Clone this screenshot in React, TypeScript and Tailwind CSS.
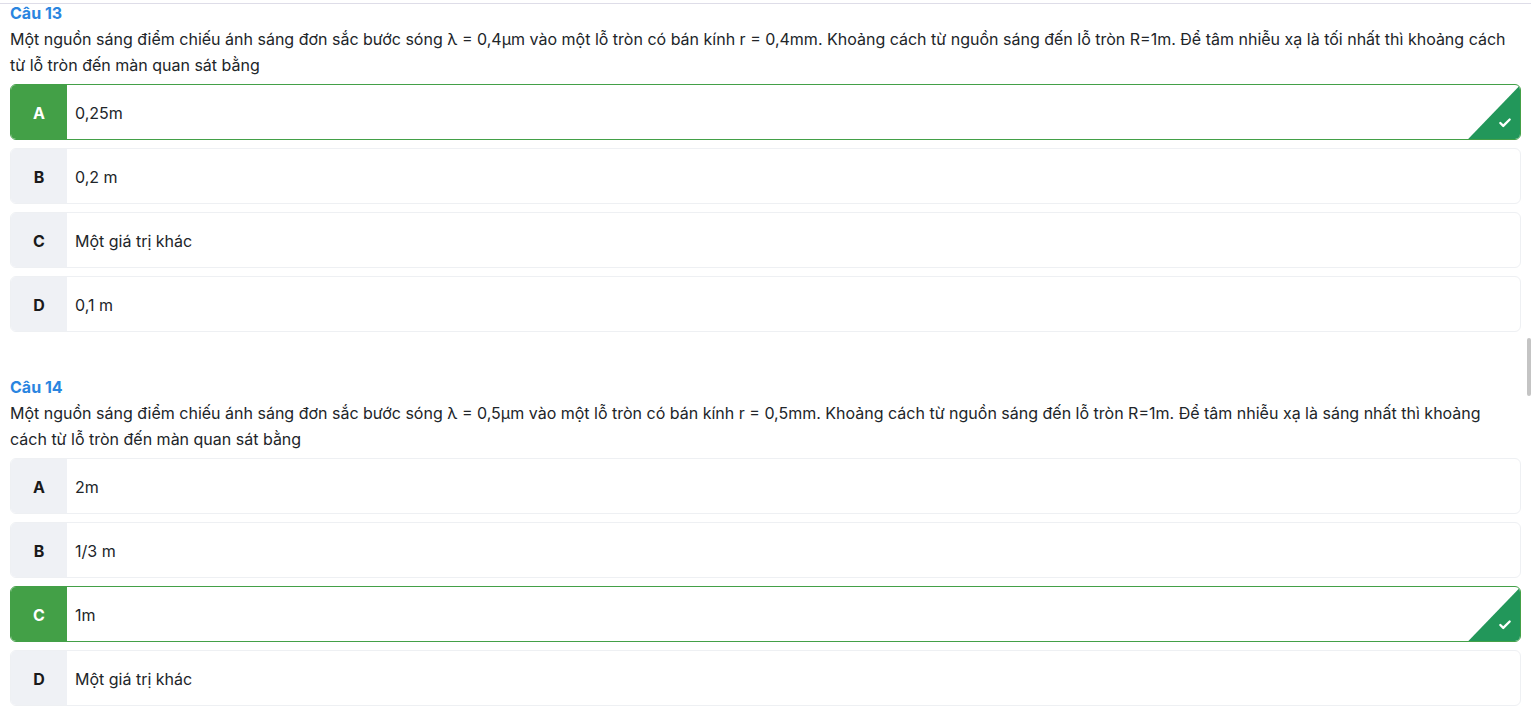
import { Check } from 'lucide-react';

type Option = { key: string; text: string; correct?: boolean };

type Question = { title: string; body: string; options: Option[] };

const questions: Question[] = [
  {
    title: 'Câu 13',
    body: 'Một nguồn sáng điểm chiếu ánh sáng đơn sắc bước sóng λ = 0,4μm vào một lỗ tròn có bán kính r = 0,4mm. Khoảng cách từ nguồn sáng đến lỗ tròn R=1m. Để tâm nhiễu xạ là tối nhất thì khoảng cách từ lỗ tròn đến màn quan sát bằng',
    options: [
      { key: 'A', text: '0,25m', correct: true },
      { key: 'B', text: '0,2 m' },
      { key: 'C', text: 'Một giá trị khác' },
      { key: 'D', text: '0,1 m' },
    ],
  },
  {
    title: 'Câu 14',
    body: 'Một nguồn sáng điểm chiếu ánh sáng đơn sắc bước sóng λ = 0,5μm vào một lỗ tròn có bán kính r = 0,5mm. Khoảng cách từ nguồn sáng đến lỗ tròn R=1m. Để tâm nhiễu xạ là sáng nhất thì khoảng cách từ lỗ tròn đến màn quan sát bằng',
    options: [
      { key: 'A', text: '2m' },
      { key: 'B', text: '1/3 m' },
      { key: 'C', text: '1m', correct: true },
      { key: 'D', text: 'Một giá trị khác' },
    ],
  },
];

function OptionRow({ option }: { option: Option }) {
  if (option.correct) {
    return (
      <div className="relative flex h-[56px] overflow-hidden rounded-[6px] border border-[#43a047] bg-white">
        <div className="flex w-[56px] shrink-0 items-center justify-center bg-[#43a047] pt-[1px] text-[16px] font-bold text-white">
          {option.key}
        </div>
        <div className="flex items-center pl-[8px] pt-[1px] text-[16px] text-[#212529]">{option.text}</div>
        {/* corner badge */}
        <div className="absolute bottom-0 right-0 h-[54px] w-[52px] bg-[#22975a] [clip-path:polygon(100%_0,100%_100%,0_100%)]" />
        <Check className="absolute bottom-[9px] right-[8px] text-white" size={14} strokeWidth={4} />
      </div>
    );
  }
  return (
    <div className="flex h-[56px] overflow-hidden rounded-[6px] border border-[#eef0f3] bg-white">
      <div className="flex w-[56px] shrink-0 items-center justify-center bg-[#eff1f5] pt-[1px] text-[16px] font-bold text-[#1a1a1a]">
        {option.key}
      </div>
      <div className="flex items-center pl-[8px] pt-[1px] text-[16px] text-[#212529]">{option.text}</div>
    </div>
  );
}

function QuestionBlock({ q }: { q: Question }) {
  return (
    <div>
      <div className="h-[18px] text-[16px] font-bold leading-[18px] text-[#2a85e0]">{q.title}</div>
      <p className="mt-[5px] text-[16px] leading-[25.6px] text-[#212529]">{q.body}</p>
      <div className="mt-[6px] flex flex-col gap-[8px]">
        {q.options.map((o) => (
          <OptionRow key={o.key} option={o} />
        ))}
      </div>
    </div>
  );
}

export default function App() {
  return (
    <div className="relative min-h-screen bg-white font-['Inter',sans-serif]">
      <div className="h-[3px]" />
      <div className="border-t border-[#dedde8] px-[10px]">
        <div className="flex flex-col gap-[46px]">
          {questions.map((q) => (
            <QuestionBlock key={q.title} q={q} />
          ))}
        </div>
      </div>
      {/* scrollbar thumb */}
      <div className="absolute right-0 top-[338px] h-[58px] w-[4px] rounded-[2px] bg-[#c4c4c4]" />
    </div>
  );
}
